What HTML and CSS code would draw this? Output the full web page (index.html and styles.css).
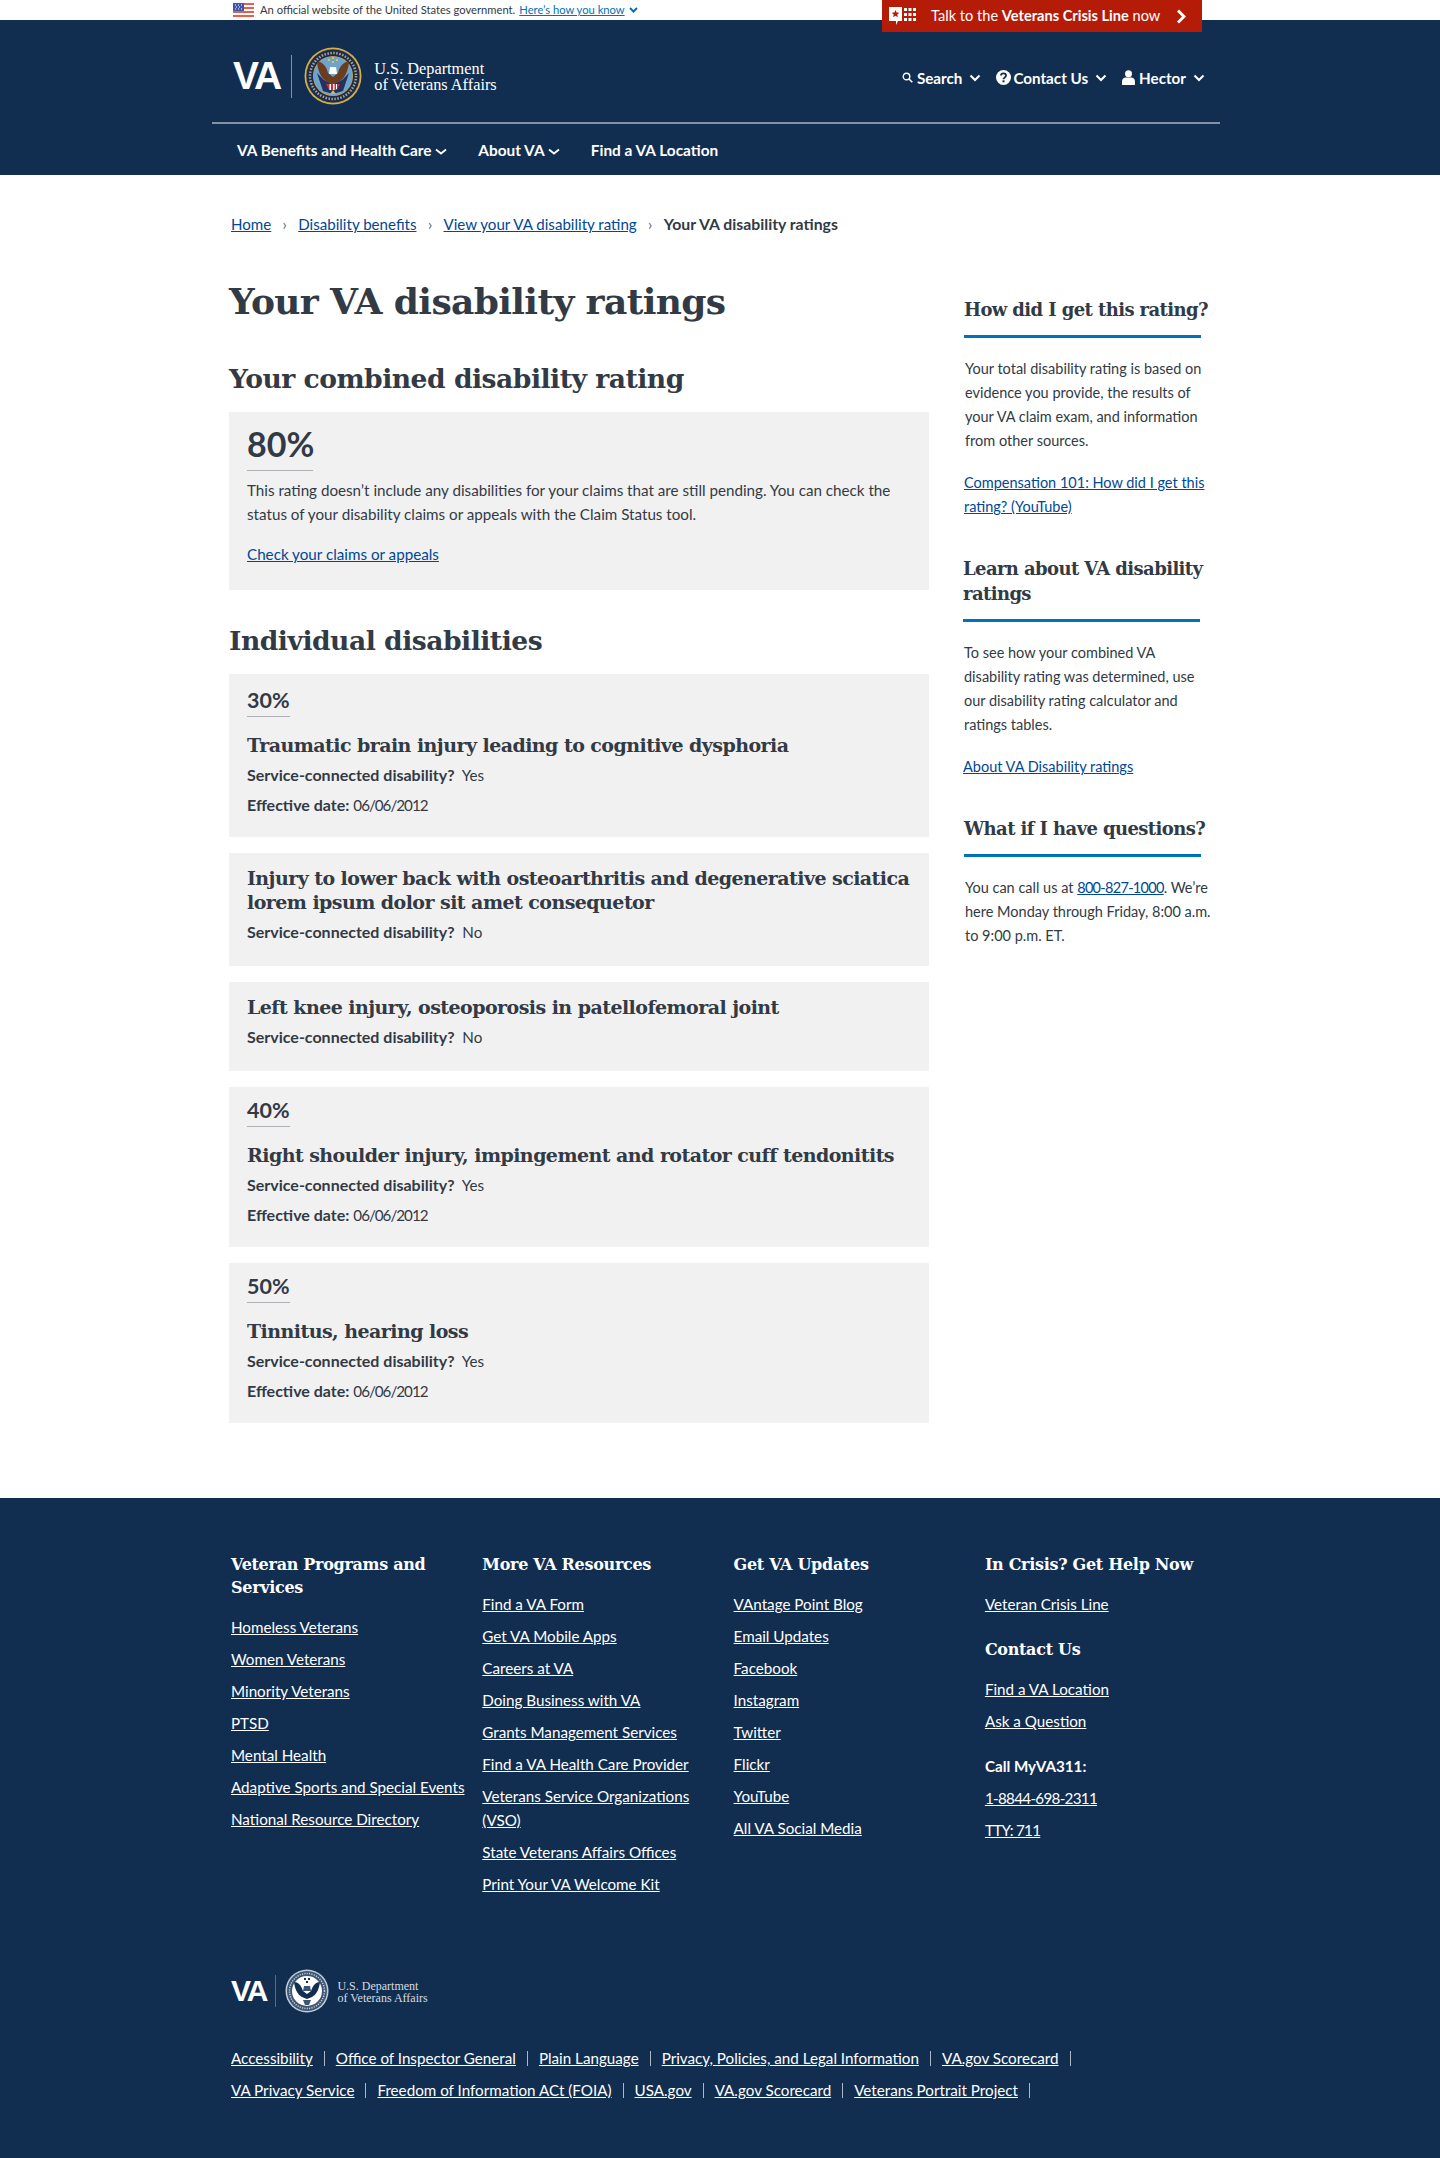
FILE: index.html
```html
<!DOCTYPE html>
<html>
<head>
  <title>Your VA disability ratings</title>
  <link rel="stylesheet" href="styles.css">
</head>
<body>
  <header class="site-header">
    <div class="official-bar">
      <svg class="flag" width="21" height="14" viewBox="0 0 21 14">
        <rect width="21" height="14" fill="#fff"/>
        <path d="M0 1h21M0 5h21M0 9h21M0 13h21" stroke="#e8604c" stroke-width="2"/>
        <rect width="11" height="8" fill="#3f57a6"/>
        <path d="M2 2h1M5 2h1M8 2h1M3 4h1M6 4h1M2 6h1M5 6h1M8 6h1" stroke="#fff"/>
      </svg>
      <span class="official-text">An official website of the United States government.</span>
      <a class="official-link" href="#">Here’s how you know</a>
      <svg class="chev-small" width="9" height="6" viewBox="0 0 9 6"><path d="M1 1l3.500 3.500L8 1" fill="none" stroke="#0071bb" stroke-width="2"/></svg>
    </div>
    <a class="crisis" href="#">
      <svg class="crisis-icon" width="28" height="18" viewBox="0 0 28 18">
        <path d="M0 0h13v14H9l-2 4v-4H0z" fill="#fff"/>
        <path d="M6.500 3l1.100 2.500 2.700.2-2 1.800.6 2.700-2.400-1.400-2.400 1.400.6-2.700-2-1.800 2.700-.2z" fill="#b51c08"/>
        <g fill="#fff">
          <rect x="15" y="1" width="3" height="3"/><rect x="19.500" y="1" width="3" height="3"/><rect x="24" y="1" width="3" height="3"/>
          <rect x="15" y="6" width="3" height="3"/><rect x="19.500" y="6" width="3" height="3"/><rect x="24" y="6" width="3" height="3"/>
          <rect x="15" y="11" width="3" height="3"/><rect x="19.500" y="11" width="3" height="3"/><rect x="24" y="11" width="3" height="3"/>
        </g>
      </svg>
      <span class="crisis-text">Talk to the <b>Veterans Crisis Line</b> now</span>
      <svg width="10" height="15" viewBox="0 0 10 15"><path d="M2 1.500l6 6-6 6" fill="none" stroke="#fff" stroke-width="3"/></svg>
    </a>
    <div class="header-main">
      <div class="logo">
        <span class="logo-va">VA</span>
        <span class="logo-rule"></span>
        <svg class="seal" width="58" height="58" viewBox="0 0 58 58">
          <circle cx="29" cy="29" r="28.500" fill="#d8b34c"/>
          <circle cx="29" cy="29" r="27" fill="#1d2b4f"/>
          <circle cx="29" cy="29" r="27" fill="none" stroke="#c9a545" stroke-width=".6"/>
          <circle cx="29" cy="29" r="23" fill="none" stroke="#a9a78c" stroke-width="2.500" stroke-dasharray="1.500 1.500"/>
          <circle cx="29" cy="29" r="20" fill="#c9a545"/>
          <circle cx="29" cy="29" r="19.300" fill="#6ea3cf"/>
          <path d="M13 26l6 18 10 3 10-3 6-18-7 7-9 4-9-4z" fill="#26325e"/>
          <path d="M13 15c4-1 9 3 11 11l5 4 5-4c2-8 7-12 11-11-1 8-3 15-9 19l-7 3-7-3c-6-4-8-11-9-19z" fill="#6b3d1e"/>
          <path d="M26 20h6l1 7h-8z" fill="#fff"/>
          <path d="M22 37h14l-3 6h-8z" fill="#c22f36"/>
          <path d="M25.500 37h1.500v6h-1.500zM29 37h1.500v6H29zM32 37h1v5h-1z" fill="#fff"/>
          <path d="M29 43l3 4h-6z" fill="#d8b34c"/>
          <path d="M24 12h2v2h-2zM28 10h2v2h-2zM32 12h2v2h-2zM28 14h2v2h-2z" fill="#e2c04f"/>
        </svg>
        <span class="logo-dept">U.S. Department<br>of Veterans Affairs</span>
      </div>
      <nav class="utility">
        <a class="util-item" href="#">
          <svg width="11" height="11" viewBox="0 0 11 11"><circle cx="4.500" cy="4.500" r="3.300" fill="none" stroke="#fff" stroke-width="1.400"/><path d="M7 7l3.300 3.300" stroke="#fff" stroke-width="1.600"/></svg>
          <span>Search</span>
          <svg class="chev" width="12" height="8" viewBox="0 0 12 8"><path d="M1.500 1.500L6 6l4.500-4.500" fill="none" stroke="#fff" stroke-width="2"/></svg>
        </a>
        <a class="util-item" href="#">
          <svg width="15" height="15" viewBox="0 0 15 15"><circle cx="7.500" cy="7.500" r="7.500" fill="#fff"/><path d="M5 5.600c0-3 5-3 5 0 0 2-2.500 2-2.500 3.600" fill="none" stroke="#112e51" stroke-width="1.800"/><rect x="6.500" y="10.300" width="2" height="2" fill="#112e51"/></svg>
          <span class="tight">Contact Us</span>
          <svg class="chev" width="12" height="8" viewBox="0 0 12 8"><path d="M1.500 1.500L6 6l4.500-4.500" fill="none" stroke="#fff" stroke-width="2"/></svg>
        </a>
        <a class="util-item" href="#">
          <svg class="user-icon" width="13" height="15" viewBox="0 0 13 15"><circle cx="6.500" cy="3.800" r="3.500" fill="#fff"/><path d="M0 15v-3.500C0 9 2 7.500 3.500 7.500h6C11 7.500 13 9 13 11.500V15z" fill="#fff"/></svg>
          <span>Hector</span>
          <svg class="chev" width="12" height="8" viewBox="0 0 12 8"><path d="M1.500 1.500L6 6l4.500-4.500" fill="none" stroke="#fff" stroke-width="2"/></svg>
        </a>
      </nav>
    </div>
    <nav class="main-nav">
      <a href="#">VA Benefits and Health Care <svg class="chev" width="12" height="8" viewBox="0 0 12 8"><path d="M1 1.500L6 5.500l5-4" fill="none" stroke="#fff" stroke-width="1.800"/></svg></a>
      <a href="#">About VA <svg class="chev" width="12" height="8" viewBox="0 0 12 8"><path d="M1 1.500L6 5.500l5-4" fill="none" stroke="#fff" stroke-width="1.800"/></svg></a>
      <a href="#">Find a VA Location</a>
    </nav>
  </header>

  <div class="crumbs">
    <a href="#">Home</a><span class="sep">›</span>
    <a href="#">Disability benefits</a><span class="sep">›</span>
    <a href="#">View your VA disability rating</a><span class="sep">›</span>
    <b>Your VA disability ratings</b>
  </div>

  <main class="page">
    <div class="content">
      <h1>Your VA disability ratings</h1>
      <h2>Your combined disability rating</h2>
      <section class="box combined">
        <div class="pct-big">80%</div>
        <p>This rating doesn’t include any disabilities for your claims that are still pending. You can check the status of your disability claims or appeals with the Claim Status tool.</p>
        <p class="box-link"><a href="#">Check your claims or appeals</a></p>
      </section>

      <h2 class="h2-individual">Individual disabilities</h2>
      <section class="box card rated card-first">
        <div class="pct">30%</div>
        <h3>Traumatic brain injury leading to cognitive dysphoria</h3>
        <div class="row"><b>Service-connected disability?</b>&nbsp; Yes</div>
        <div class="row"><b>Effective date:</b> <span class="date">06/06/2012</span></div>
      </section>
      <section class="box card">
        <h3>Injury to lower back with osteoarthritis and degenerative sciatica lorem ipsum dolor sit amet consequetor</h3>
        <div class="row"><b>Service-connected disability?</b>&nbsp; No</div>
      </section>
      <section class="box card">
        <h3>Left knee injury, osteoporosis in patellofemoral joint</h3>
        <div class="row"><b>Service-connected disability?</b>&nbsp; No</div>
      </section>
      <section class="box card rated">
        <div class="pct">40%</div>
        <h3>Right shoulder injury, impingement and rotator cuff tendonitits</h3>
        <div class="row"><b>Service-connected disability?</b>&nbsp; Yes</div>
        <div class="row"><b>Effective date:</b> <span class="date">06/06/2012</span></div>
      </section>
      <section class="box card rated">
        <div class="pct">50%</div>
        <h3>Tinnitus, hearing loss</h3>
        <div class="row"><b>Service-connected disability?</b>&nbsp; Yes</div>
        <div class="row"><b>Effective date:</b> <span class="date">06/06/2012</span></div>
      </section>
    </div>

    <aside class="side">
      <div class="side-block">
        <h4>How did I get this rating?</h4>
        <p class="side-text">Your total disability rating is based on evidence you provide, the results of your VA claim exam, and information from other sources.</p>
        <p><a href="#">Compensation 101: How did I get this rating? (YouTube)</a></p>
      </div>
      <div class="side-block side-mid">
        <h4>Learn about VA disability ratings</h4>
        <p class="side-text">To see how your combined VA disability rating was determined, use our disability rating calculator and ratings tables.</p>
        <p><a href="#">About VA Disability ratings</a></p>
      </div>
      <div class="side-block">
        <h4>What if I have questions?</h4>
        <p class="side-text">You can call us at <a class="digits" href="#">800-827-1000</a>. We’re here Monday through Friday, 8:00 a.m. to 9:00 p.m. ET.</p>
      </div>
    </aside>
  </main>

  <footer class="site-footer">
    <div class="foot-cols">
      <div class="foot-col">
        <h5>Veteran Programs and Services</h5>
        <a href="#">Homeless Veterans</a>
        <a href="#">Women Veterans</a>
        <a href="#">Minority Veterans</a>
        <a href="#">PTSD</a>
        <a href="#">Mental Health</a>
        <a href="#">Adaptive Sports and Special Events</a>
        <a href="#">National Resource Directory</a>
      </div>
      <div class="foot-col">
        <h5>More VA Resources</h5>
        <a href="#">Find a VA Form</a>
        <a href="#">Get VA Mobile Apps</a>
        <a href="#">Careers at VA</a>
        <a href="#">Doing Business with VA</a>
        <a href="#">Grants Management Services</a>
        <a href="#">Find a VA Health Care Provider</a>
        <a href="#">Veterans Service Organizations (VSO)</a>
        <a href="#">State Veterans Affairs Offices</a>
        <a href="#">Print Your VA Welcome Kit</a>
      </div>
      <div class="foot-col">
        <h5>Get VA Updates</h5>
        <a href="#">VAntage Point Blog</a>
        <a href="#">Email Updates</a>
        <a href="#">Facebook</a>
        <a href="#">Instagram</a>
        <a href="#">Twitter</a>
        <a href="#">Flickr</a>
        <a href="#">YouTube</a>
        <a href="#">All VA Social Media</a>
      </div>
      <div class="foot-col">
        <h5>In Crisis? Get Help Now</h5>
        <a href="#">Veteran Crisis Line</a>
        <h5 class="foot-sub">Contact Us</h5>
        <a href="#">Find a VA Location</a>
        <a href="#">Ask a Question</a>
        <div class="foot-call">Call MyVA311:</div>
        <a class="digits" href="#">1-8844-698-2311</a>
        <a class="digits" href="#">TTY: 711</a>
      </div>
    </div>
    <div class="logo logo-foot">
      <span class="logo-va">VA</span>
      <span class="logo-rule"></span>
      <svg class="seal" width="44" height="44" viewBox="0 0 44 44">
        <circle cx="22" cy="22" r="21.500" fill="#c4cdd8"/>
        <circle cx="22" cy="22" r="20" fill="#3d5674"/>
        <circle cx="22" cy="22" r="17.500" fill="none" stroke="#c4cdd8" stroke-width="1.500" stroke-dasharray="1.200 1.200"/>
        <circle cx="22" cy="22" r="15" fill="#fff"/>
        <path d="M9 13c4 0 7 3 9 9l4 3 4-3c2-6 5-9 9-9-1 7-3 12-8 15l-5 2-5-2c-5-3-7-8-8-15z" fill="#112e51"/>
        <path d="M19 17h6l1 5h-8zM18 31h8l-2 5h-4z" fill="#3d5674"/>
        <path d="M19 9h2v2h-2zM23 9h2v2h-2zM21 12h2v2h-2z" fill="#112e51"/>
      </svg>
      <span class="logo-dept">U.S. Department<br>of Veterans Affairs</span>
    </div>
    <div class="foot-links">
      <a href="#">Accessibility</a><i></i><a href="#">Office of Inspector General</a><i></i><a href="#">Plain Language</a><i></i><a href="#">Privacy, Policies, and Legal Information</a><i></i><a href="#">VA.gov Scorecard</a><i></i>
    </div>
    <div class="foot-links">
      <a href="#">VA Privacy Service</a><i></i><a href="#">Freedom of Information ACt (FOIA)</a><i></i><a href="#">USA.gov</a><i></i><a href="#">VA.gov Scorecard</a><i></i><a href="#">Veterans Portrait Project</a><i></i>
    </div>
  </footer>
</body>
</html>
```

FILE: styles.css
```css
* {
  box-sizing: border-box;
}
body {
  margin: 0;
  font-family: "Lato", "Noto Sans", sans-serif;
  font-size: 15.2px;
  line-height: 24px;
  color: #323a45;
  background-color: #112e51;
}
a {
  color: #004795;
}
.digits {
  letter-spacing: -0.7px;
}

/* header */
.site-header {
  position: relative;
  height: 175px;
  background-color: #112e51;
  color: #fff;
}
.site-header a {
  color: #fff;
  text-decoration: none;
}
.official-bar {
  display: flex;
  align-items: center;
  height: 20px;
  padding-left: 233px;
  background-color: #fff;
  font-size: 11.2px;
  line-height: 20px;
}
.flag {
  margin-right: 6px;
}
.official-text {
  color: #323a45;
  margin-right: 4px;
}
.site-header a.official-link {
  color: #0071bb;
  text-decoration: underline;
  margin-right: 4px;
}
.crisis {
  position: absolute;
  top: 0;
  left: 882px;
  width: 320px;
  height: 32px;
  display: flex;
  align-items: center;
  padding: 0 16px 0 7px;
  background-color: #b51c08;
  font-size: 14.6px;
}
.crisis-text {
  flex: 1;
  margin-left: 14px;
}
.header-main {
  display: flex;
  align-items: center;
  justify-content: space-between;
  width: 1008px;
  height: 104px;
  margin-left: 212px;
  padding: 10px 15px 0 21px;
  border-bottom: 2px solid #8291a4;
}
.logo {
  display: flex;
  align-items: center;
}
.logo-va {
  font-family: "Liberation Sans", sans-serif;
  font-weight: bold;
  font-size: 39px;
  line-height: 44px;
  letter-spacing: -2px;
  color: #fff;
}
.logo-rule {
  width: 1px;
  height: 43px;
  margin: 0 12px 0 11px;
  background-color: #8291a4;
}
.logo-dept {
  margin-left: 12px;
  padding-top: 1px;
  font-family: "Liberation Serif", serif;
  font-size: 16.3px;
  line-height: 16px;
  color: #fff;
}
.utility {
  display: flex;
  align-items: center;
  margin-top: 3px;
}
.util-item {
  display: flex;
  align-items: center;
  margin-left: 15px;
  font-weight: bold;
  font-size: 15.2px;
}
.util-item span {
  margin: 0 7px 0 4px;
}
.util-item span.tight {
  margin-left: 2px;
}
.main-nav {
  display: flex;
  align-items: center;
  height: 51px;
  padding-left: 237px;
  font-weight: bold;
  font-size: 15.4px;
}
.main-nav a {
  margin-right: 31px;
}

/* breadcrumb */
.crumbs {
  display: flex;
  align-items: center;
  height: 61px;
  padding: 37px 0 0 231px;
  background-color: #fff;
  font-size: 15.1px;
}
.crumbs b {
  font-size: 15.8px;
}
.sep {
  width: 27px;
  text-align: center;
  color: #5b616b;
}

/* main layout */
.page {
  display: flex;
  align-items: flex-start;
  padding: 0 0 59px 229px;
  background-color: #fff;
}
.content {
  width: 700px;
}
h1, h2, h3, h4, h5 {
  margin: 0;
  font-family: "DejaVu Serif", serif;
  font-weight: bold;
}
h1 {
  margin-top: 40px;
  font-size: 36px;
  line-height: 50px;
  letter-spacing: -0.63px;
}
h2 {
  margin-top: 35px;
  margin-bottom: 15px;
  font-size: 26.6px;
  line-height: 36px;
  letter-spacing: -0.5px;
}
.content .h2-individual {
  margin-top: 33px;
}
.box {
  background-color: #f1f1f1;
  padding: 0 10px 0 18px;
}
.combined {
  height: 178px;
  padding-top: 12px;
}
.combined p {
  margin: 7px 0 0;
}
.combined .box-link {
  margin-top: 16px;
}
.pct-big {
  display: block;
  width: 66px;
  padding-bottom: 6px;
  border-bottom: 1px solid #aeb0b5;
  font-weight: bold;
  font-size: 34px;
  line-height: 40px;
}
.card {
  margin-bottom: 16px;
  padding-top: 12px;
  padding-bottom: 22px;
}
.rated {
  padding-bottom: 20px;
}
.pct {
  width: 43px;
  margin-top: -3px;
  padding-bottom: 2px;
  border-bottom: 1px solid #aeb0b5;
  font-weight: bold;
  font-size: 21.5px;
  line-height: 28px;
}
.card-first .pct {
  margin-top: 0;
}
h3 {
  margin-top: 1px;
  margin-bottom: 5px;
  font-size: 19px;
  line-height: 24px;
  letter-spacing: -0.55px;
}
.pct + h3 {
  margin-top: 16px;
  margin-bottom: 4px;
}
.row {
  margin-top: 6px;
}
.row b {
  font-size: 16px;
}
.date {
  letter-spacing: -1px;
}

/* sidebar */
.side {
  width: 253px;
  margin-left: 35px;
  padding-top: 61px;
  font-size: 14.5px;
}
.side-block {
  margin-bottom: 37px;
}
.side-mid {
  margin-left: -1px;
}
.side-mid .side-text {
  max-width: 248px;
}
.side h4 {
  margin-bottom: 19px;
  font-size: 18px;
  line-height: 25px;
  letter-spacing: -0.6px;
}
.side h4::after {
  content: "";
  display: block;
  width: 237px;
  height: 3px;
  margin-top: 13px;
  background-color: #0071bb;
}
.side p {
  margin: 0 0 18px;
}
.side .side-text {
  padding-left: 1px;
}

/* footer */
.site-footer {
  height: 661px;
  padding: 55px 0 0 231px;
  background-color: #112e51;
  color: #fff;
}
.site-footer a {
  display: block;
  color: #fff;
}
.foot-cols {
  display: flex;
  height: 416px;
}
.foot-col {
  width: 251.3px;
  padding-right: 14px;
}
.foot-col h5 {
  margin-bottom: 16px;
  font-size: 16px;
  line-height: 23px;
  letter-spacing: -0.3px;
}
.foot-col a {
  margin-bottom: 8px;
}
.foot-col .foot-sub {
  margin-top: 22px;
}
.foot-call {
  margin-top: 21px;
  margin-bottom: 8px;
  font-weight: bold;
}
.logo-foot .logo-va {
  font-size: 30px;
  line-height: 34px;
}
.logo-foot .logo-rule {
  height: 32px;
  margin: 0 9px;
  background-color: #5b6b80;
}
.logo-foot .logo-dept {
  margin-left: 8px;
  font-size: 12px;
  line-height: 12px;
  color: #d6dbe2;
}
.logo-foot {
  margin-bottom: 29px;
}
.foot-links {
  display: flex;
  align-items: center;
  height: 32px;
}
.foot-links i {
  width: 1px;
  height: 15px;
  margin: 0 11px;
  background-color: #aeb6c2;
}
```
